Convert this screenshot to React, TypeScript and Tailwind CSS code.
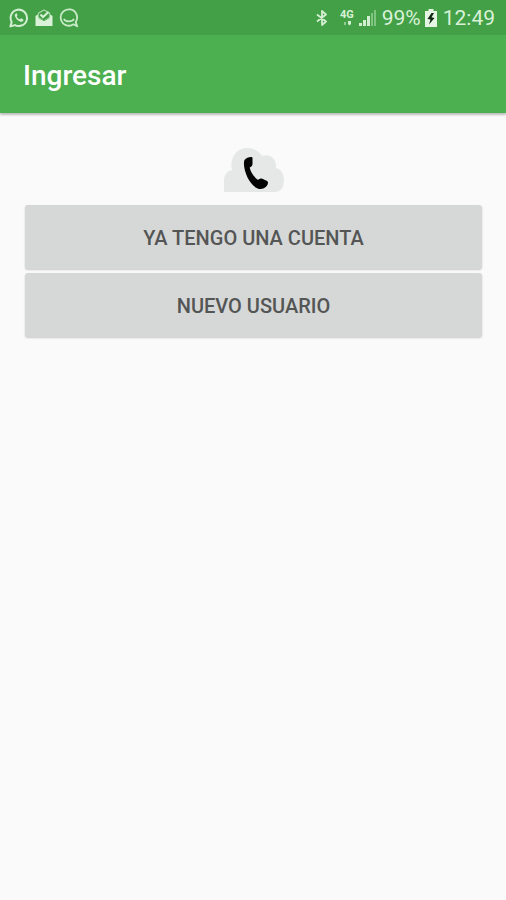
import React from "react";

function WhatsAppIcon() {
  return (
    <svg className="size-5" viewBox="0 0 20 20" fill="none" aria-hidden="true">
      <path
        d="M1.400 18.400l1.300-4.500A8.200 8.200 0 1 1 6 17.100z"
        stroke="#d3efd2"
        strokeWidth="2"
        strokeLinejoin="round"
      />
      <path
        d="M6.900 5.400c-1.200.6-1.400 2-.6 3.500 1 2.100 2.600 3.700 4.700 4.600 1.500.6 2.800.2 3.300-1.100.2-.5.1-.9-.2-1.100l-1.700-.9c-.4-.1-.7 0-1 .5-.3.500-.6.600-1.100.3-1-.5-1.800-1.300-2.400-2.300-.2-.3-.1-.6.2-.9.400-.4.500-.7.300-1.100l-.6-1.300c-.2-.3-.5-.4-.9-.2z"
        fill="#d3efd2"
      />
    </svg>
  );
}

function MailIcon() {
  return (
    <svg className="h-5 w-[18px]" viewBox="0 0 18 20" fill="none" aria-hidden="true">
      <path d="M.5 8L3.500 6v3L9 12.500 14.500 9V6l3 2v10H.5z" fill="#d8f1d7" />
      <path d="M3.500 6.500V5L9 2l5.500 3v1.500" stroke="#a9d9aa" strokeWidth="1.200" />
      <path d="M5.500 6.500L8 9l5.500-5" stroke="#d8f1d7" strokeWidth="2" />
      <path d="M3.500 9.500L9 12.800l5.500-3.300" stroke="#5fb262" strokeWidth="1" />
    </svg>
  );
}

function ChatIcon() {
  return (
    <svg className="size-5" viewBox="0 0 20 20" fill="none" aria-hidden="true">
      <path
        d="M14.500 16.300A8.200 8.200 0 1 1 16.700 14.100L18.200 18.300z"
        stroke="#c9ebc9"
        strokeWidth="1.800"
        strokeLinejoin="round"
      />
      <path d="M4.800 11c1.800 3.200 8.300 3.200 10.300 0" stroke="#c9ebc9" strokeWidth="1.600" />
    </svg>
  );
}

function BluetoothIcon() {
  return (
    <svg className="h-4 w-3" viewBox="0 0 12 16" fill="none" aria-hidden="true">
      <path
        d="M1 4.500l9 7L6 15V1l4 3.500-9 7"
        stroke="#d3efd2"
        strokeWidth="1.800"
        strokeLinejoin="round"
      />
    </svg>
  );
}

function DataIcon() {
  return (
    <svg className="h-1.5 w-3" viewBox="0 0 12 6" aria-hidden="true">
      <path d="M3 2h2v3H3z" fill="#8fce91" />
      <path d="M7 1h3v3L8.500 5.500 7 4z" fill="#d3efd2" />
    </svg>
  );
}

function SignalIcon() {
  return (
    <svg className="h-4 w-[18px]" viewBox="0 0 18 16" aria-hidden="true">
      <path d="M1 13h3v3H1zM5 10h3v6H5zM9 6h3v10H9z" fill="#d3efd2" />
      <path d="M13 3h2v13h-2zM16 0h2v16h-2z" fill="#7fc581" />
    </svg>
  );
}

function BatteryIcon() {
  return (
    <svg className="h-[18px] w-3" viewBox="0 0 12 18" aria-hidden="true">
      <path d="M3.500 0h5v2H12v16H0V2h3.500z" fill="#e6f6e5" />
      <path d="M6.500 4L2.500 10l3 .5L4 15.500 9.500 9 6.500 8.300 9 4z" fill="#102812" />
    </svg>
  );
}

function CloudPhoneLogo() {
  return (
    <svg className="h-[46px] w-[62px]" viewBox="0 0 62 46" role="img" aria-label="Teléfono en la nube">
      <path
        d="M1 45V34c0-6 3-10 8-11C6 11 14 1 24 1c7 0 12 3 15 8 7-3 15 2 14 12 5 1 8 6 8 12 0 7-3 12-9 12z"
        fill="#e6e7e7"
      />
      <path
        d="M21.500 13c1.500-2 4-3 6.500-3 1 0 1.500.4 1.500 1.200V17c0 2-1.500 3-2.800 3.500.8 4.500 3.800 9 8.300 12.500 1.500-1.500 3.500-2 5.500-.8 1.500 1 4.500 1.300 4.500 3.300 0 3.500-3.500 6.500-7.500 6.500-5 0-10-5.500-13-11.500-3-6.500-4.500-14-3-17.500z"
        fill="#030303"
      />
    </svg>
  );
}

function StatusBar() {
  return (
    <div className="flex h-[35px] items-center justify-between bg-[#43a047] pr-[11px] pl-[9px] text-[#d8f1d7]">
      <div className="flex items-center gap-1.5">
        <WhatsAppIcon />
        <MailIcon />
        <ChatIcon />
      </div>
      <div className="flex items-center">
        <BluetoothIcon />
        <div className="ml-3 flex flex-col items-center">
          <span className="text-[11px] leading-[11px] font-bold">4G</span>
          <DataIcon />
        </div>
        <div className="ml-1">
          <SignalIcon />
        </div>
        <span className="ml-1.5 text-[21px] leading-6">99%</span>
        <div className="ml-1">
          <BatteryIcon />
        </div>
        <time className="ml-1.5 text-[21px] leading-6">12:49</time>
      </div>
    </div>
  );
}

function MaterialButton({ children }: { children: React.ReactNode }) {
  return (
    <button
      type="button"
      className="h-16 w-full rounded-[3px] bg-[#d6d8d7] pt-0.5 text-[20px] leading-6 font-medium text-[#545555] uppercase shadow-[0_1px_2px_rgba(0,0,0,0.2)]"
    >
      {children}
    </button>
  );
}

export default function App() {
  return (
    <div className="flex min-h-screen flex-col bg-[#fafafa] font-[Roboto,sans-serif]">
      <StatusBar />
      <header className="flex h-[78px] items-center bg-[#4caf50] px-[23px] pt-1 shadow-[0_2px_2px_rgba(0,0,0,0.25)]">
        <h1 className="text-[28px] leading-8 font-medium text-white">Ingresar</h1>
      </header>
      <main className="flex flex-col items-center pt-[34px] pr-6 pl-[25px]">
        <CloudPhoneLogo />
        <div className="mt-3 flex w-full flex-col gap-1">
          <MaterialButton>Ya tengo una cuenta</MaterialButton>
          <MaterialButton>Nuevo usuario</MaterialButton>
        </div>
      </main>
    </div>
  );
}
